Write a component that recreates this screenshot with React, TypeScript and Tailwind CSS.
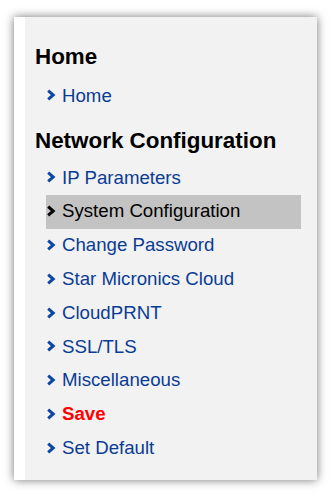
import React from "react";

const Chevron = ({ color }: { color: string }) => (
  <svg width="10" height="12" viewBox="0 0 10 12" className="shrink-0">
    <polyline
      points="2.2,1.6 7.2,6 2.2,10.4"
      fill="none"
      stroke={color}
      strokeWidth="3"
      strokeLinejoin="miter"
    />
  </svg>
);

type Item = { label: string; active?: boolean; save?: boolean };

const Row = ({ item }: { item: Item }) => {
  const chevColor = item.active ? "#000000" : "#0b47a3";
  const textCls = item.active
    ? "text-black"
    : item.save
    ? "text-[#ff0000] font-bold"
    : "text-[#0a3c94]";
  return (
    <div
      className={`ml-[21px] mr-[16px] h-[33.8px] flex items-center ${
        item.active ? "bg-[#c3c3c3]" : ""
      }`}
    >
      <div className="w-[16px] flex items-center -mt-[1px]">
        <Chevron color={chevColor} />
      </div>
      <span className={`text-[18.67px] leading-none ${textCls}`}>{item.label}</span>
    </div>
  );
};

export default function App() {
  const items: Item[] = [
    { label: "IP Parameters" },
    { label: "System Configuration", active: true },
    { label: "Change Password" },
    { label: "Star Micronics Cloud" },
    { label: "CloudPRNT" },
    { label: "SSL/TLS" },
    { label: "Miscellaneous" },
    { label: "Save", save: true },
    { label: "Set Default" },
  ];
  return (
    <div
      className="w-[332px] h-[496px] bg-white pt-[17px] pl-[14px]"
      style={{ fontFamily: '"Liberation Sans", Arial, sans-serif' }}
    >
      <div className="w-[303px] h-[463px] flex shadow-[0_0_9px_rgba(0,0,0,0.55)]">
        <div className="w-[11px] bg-white shrink-0" />
        <div className="flex-1 bg-[#f2f2f2] pt-[25.4px]">
          <div className="pl-[10px] h-[30px] flex items-center text-[22.4px] font-bold text-black leading-none">
            Home
          </div>
          <div className="mt-[6.6px]">
            <Row item={{ label: "Home" }} />
          </div>
          <div className="mt-[13.6px] pl-[10px] h-[30px] flex items-center text-[22.4px] font-bold text-black leading-none">
            Network Configuration
          </div>
          <div className="mt-[4.6px] flex flex-col">
            {items.map((it) => (
              <Row key={it.label} item={it} />
            ))}
          </div>
        </div>
      </div>
    </div>
  );
}
